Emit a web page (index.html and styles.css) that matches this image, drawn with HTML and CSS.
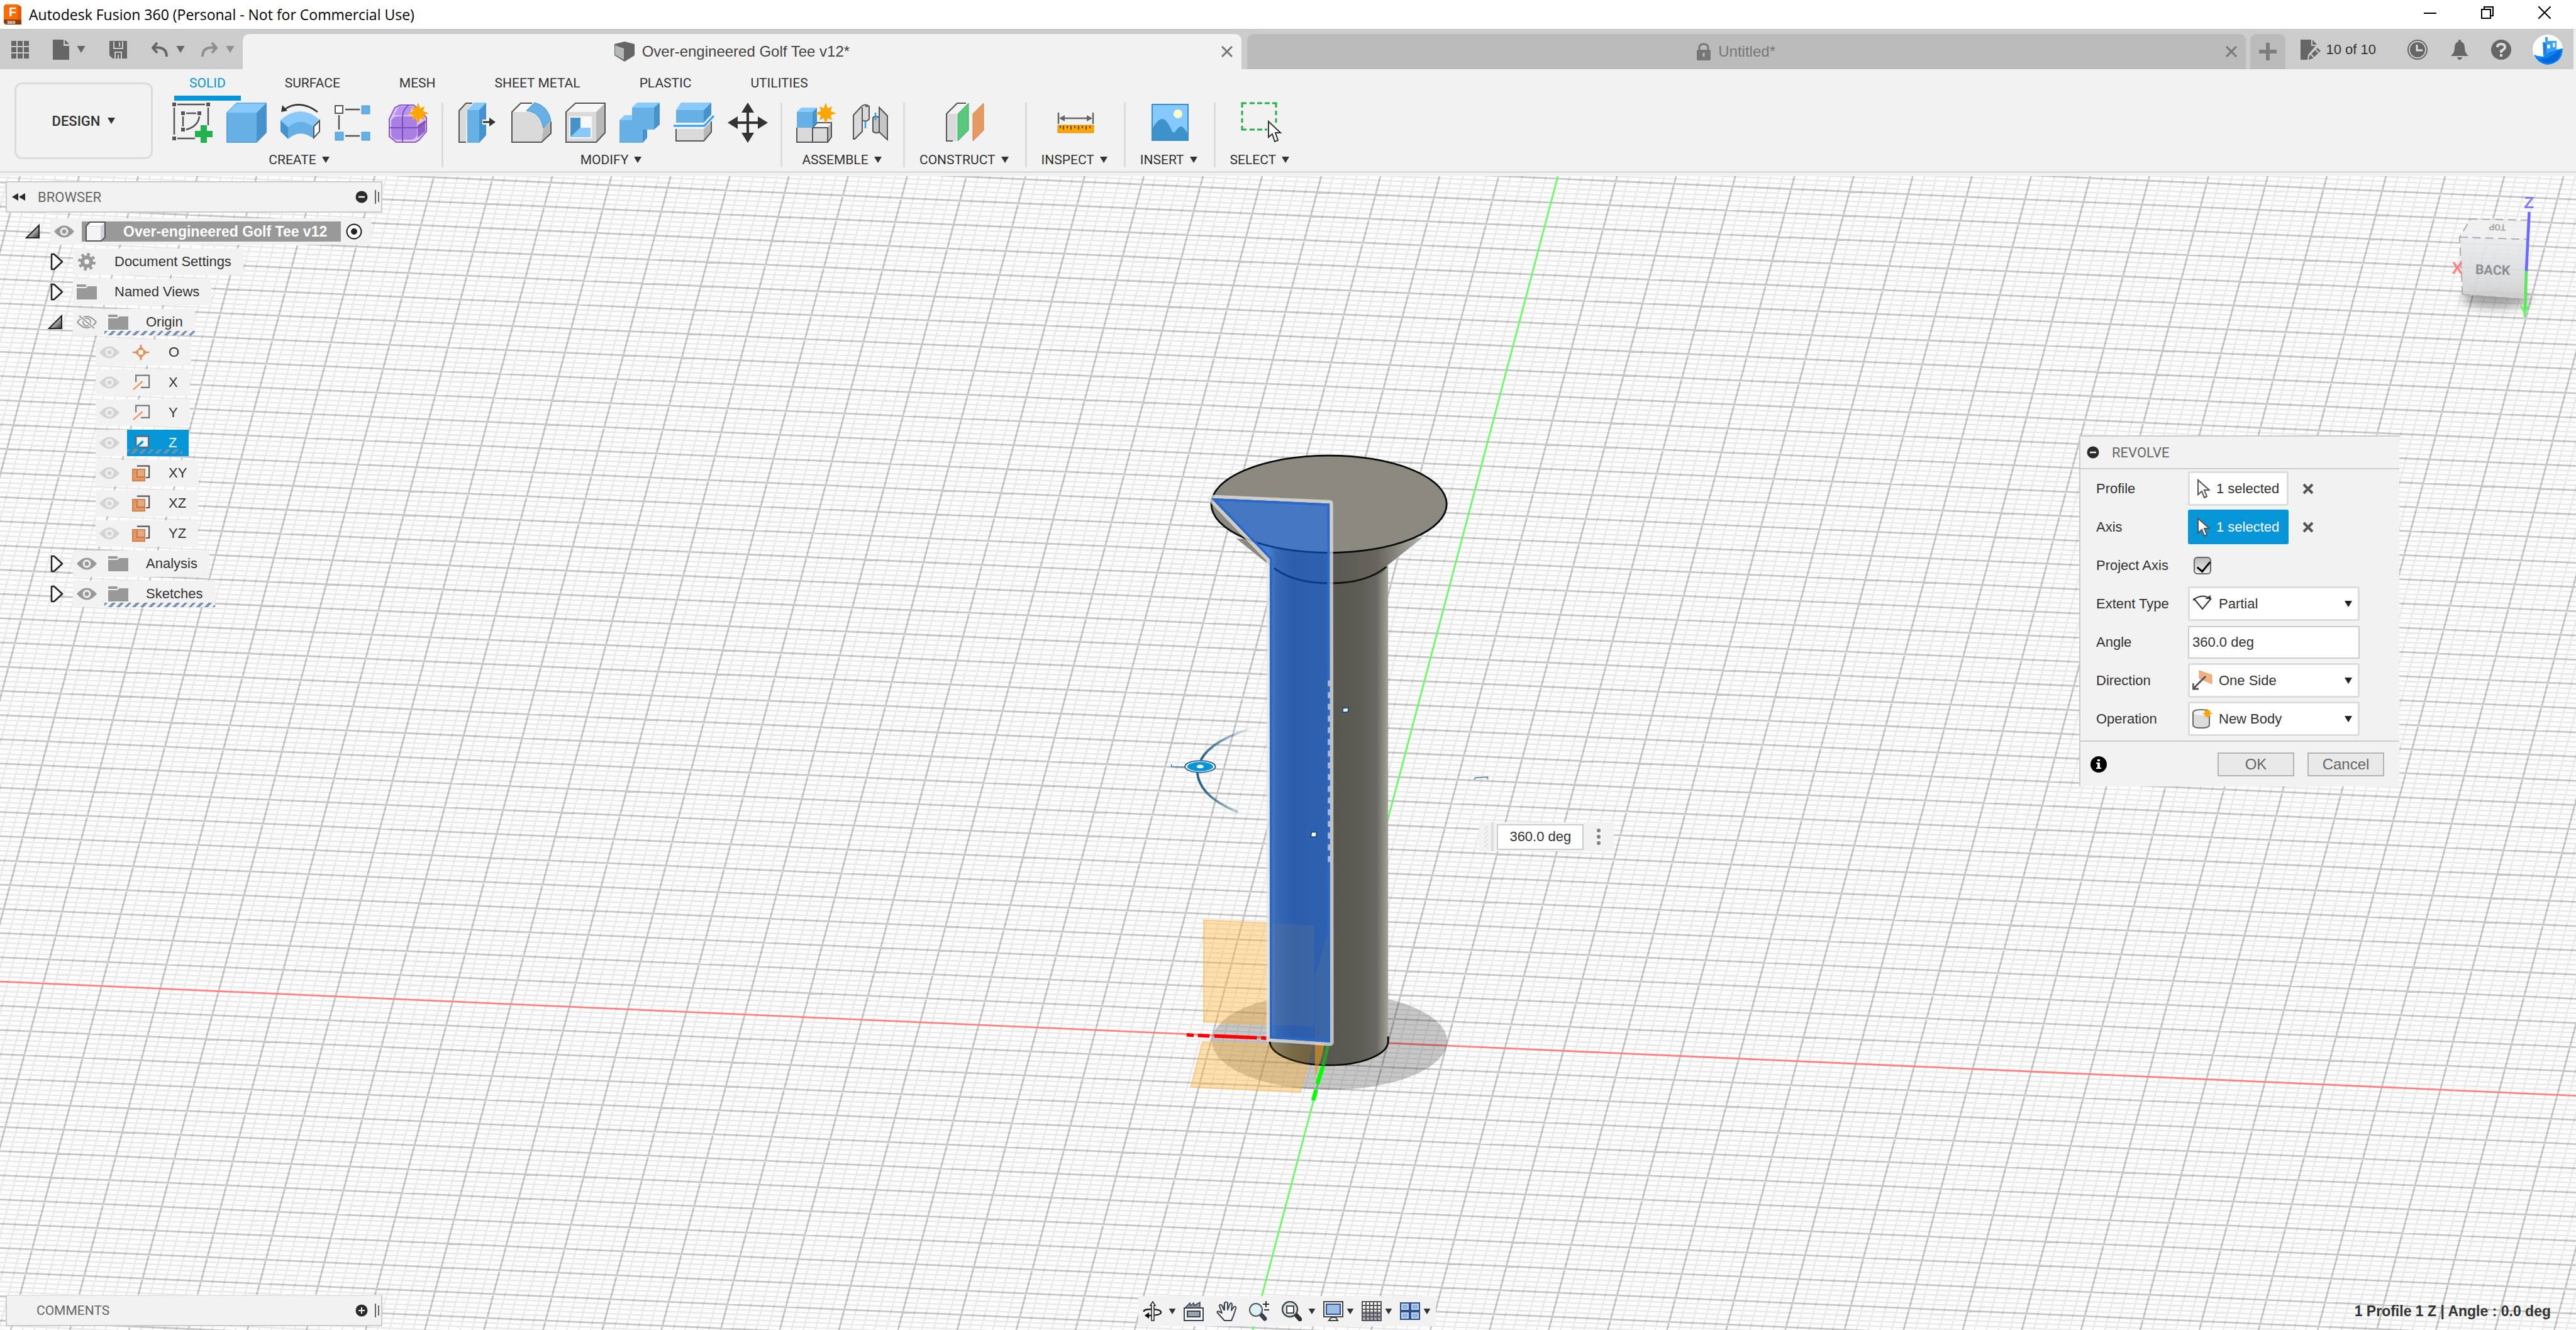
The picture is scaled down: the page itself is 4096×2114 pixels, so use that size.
FILE: index.html
```html
<!DOCTYPE html>
<html lang="en">
<head>
<meta charset="utf-8">
<title>Autodesk Fusion 360 (Personal - Not for Commercial Use)</title>
<link rel="stylesheet" href="styles.css">
</head>
<body>
<svg class="sprite" aria-hidden="true">
  <symbol id="caret" viewBox="0 0 12 10"><path d="M0 0H12L6 10Z" fill="currentColor"/></symbol>
  <symbol id="star" viewBox="-17 -17 34 34"><path d="M0-16L3-7.4L9.500-10.500L7.400-3L16 0L7.400 3L9.500 10.500L3 7.400L0 16L-3 7.400L-9.500 10.500L-7.400 3L-16 0L-7.400-3L-9.500-10.500L-3-7.400Z" fill="#ffa500"/></symbol>
  <symbol id="cross" viewBox="0 0 18 18"><path d="M2 2L16 16M16 2L2 16" stroke="currentColor" stroke-width="4" fill="none"/></symbol>
  <symbol id="eye" viewBox="0 0 32 20"><path d="M0 10Q16-9 32 10Q16 29 0 10Z" fill="currentColor"/><circle cx="16" cy="10" r="6.500" fill="#f2f2f2"/><circle cx="16" cy="10" r="3.500" fill="currentColor"/></symbol>
  <symbol id="eye-off" viewBox="0 0 32 22"><path d="M1 11Q16-7 31 11Q16 29 1 11Z" fill="none" stroke="currentColor" stroke-width="2"/><circle cx="16" cy="11" r="6" fill="none" stroke="currentColor" stroke-width="2"/><path d="M4 1L28 21" stroke="#f2f2f2" stroke-width="5"/><path d="M4 1L28 21" stroke="currentColor" stroke-width="2"/></symbol>
  <symbol id="folder" viewBox="0 0 32 24"><path d="M0 0H14L16 3H32V24H0Z" fill="#999"/><path d="M0 5H14L17 3" stroke="#f2f2f2" stroke-width="2" fill="none"/></symbol>
  <symbol id="tri-open" viewBox="0 0 24 24"><path d="M2 22L22 2V22Z" fill="url(#triGrad)" stroke="#222" stroke-width="2"/></symbol>
  <symbol id="tri-closed" viewBox="-4 0 26 28"><path d="M2 2H6L19 14L6 26H2Z" fill="#fafafa" stroke="#222" stroke-width="2.500" stroke-linejoin="round"/></symbol>
  <symbol id="axis" viewBox="0 0 32 32"><path d="M7 15V3H31V25H16" fill="none" stroke="#777" stroke-width="2.500"/><path d="M2 29L19 14" stroke="#ee9a60" stroke-width="3"/></symbol>
  <symbol id="plane" viewBox="0 0 32 32"><path d="M9 3H31V24H25" fill="none" stroke="#555" stroke-width="2.500"/><rect x="0" y="8" width="24" height="23" fill="#e6965e"/><rect x="9" y="9" width="14" height="14" fill="#e3aa82"/><path d="M9 8V23H24" stroke="#b87444" stroke-width="2" fill="none"/><rect x="1" y="9" width="22" height="21" fill="none" stroke="#cf7f45" stroke-width="2"/></symbol>
  <symbol id="cursor" viewBox="0 0 20 32"><path d="M1 2V25L7 20L11 30L15 28L11 18L19 18Z" fill="#fafafa" stroke="#555" stroke-width="2"/></symbol>
  <symbol id="minus" viewBox="0 0 20 20"><circle cx="10" cy="10" r="9.500" fill="#2b2b2b"/><path d="M5 10H15" stroke="#f2f2f2" stroke-width="2.500"/></symbol>
  <symbol id="plus" viewBox="0 0 20 20"><circle cx="10" cy="10" r="9.500" fill="#2b2b2b"/><path d="M5 10H15M10 5V15" stroke="#f2f2f2" stroke-width="2"/></symbol>
  <symbol id="bars" viewBox="0 0 8 22"><path d="M1 0V22M6 3V19" stroke="#666" stroke-width="2"/></symbol>
  <defs>
    <linearGradient id="triGrad" x1="0" y1="0" x2="1" y2="1"><stop offset=".3" stop-color="#eee"/><stop offset="1" stop-color="#333"/></linearGradient>
  </defs>
</svg>

<div class="app">
  <header class="titlebar">
    <svg class="logo" viewBox="0 0 28 32"><path d="M3 0H22L28 4V32H3L0 29V3Z" fill="#e35c00"/><path d="M3 0H22V24H0V3Z" fill="#ff6b00"/><path d="M0 24H22L28 25V32H3L0 29Z" fill="#8f3a05"/><text x="8" y="19" class="logo-f">F</text><text x="5" y="31" class="logo-n">360</text></svg>
    <h1 class="app-title">Autodesk Fusion 360 (Personal - Not for Commercial Use)</h1>
    <div class="window-controls">
      <button class="plain" aria-label="Minimize"><svg width="20" height="20" viewBox="0 0 20 20"><path d="M0 11H20" stroke="#000" stroke-width="2"/></svg></button>
      <button class="plain" aria-label="Restore"><svg width="20" height="20" viewBox="0 0 20 20"><path d="M1 5H15V19H1ZM5 5V1H19V15H15" fill="none" stroke="#000" stroke-width="2"/></svg></button>
      <button class="plain" aria-label="Close"><svg width="20" height="20" viewBox="0 0 20 20"><path d="M0 0L20 20M20 0L0 20" stroke="#000" stroke-width="2"/></svg></button>
    </div>
  </header>

  <div class="tabbar">
    <div class="quick">
      <button class="plain" aria-label="Data panel"><svg width="28" height="28" viewBox="0 0 28 28"><path d="M0 0H8V8H0ZM10 0H18V8H10ZM20 0H28V8H20ZM0 10H8V18H0ZM10 10H18V18H10ZM20 10H28V18H20ZM0 20H8V28H0ZM10 20H18V28H10ZM20 20H28V28H20Z" fill="#666"/></svg></button>
      <button class="plain q-file" aria-label="File"><svg width="26" height="32" viewBox="0 0 26 32"><path d="M0 0H17V10H26V32H0Z" fill="#666"/><path d="M19 0L26 7H19Z" fill="#666"/></svg><svg class="caret"><use href="#caret"/></svg></button>
      <button class="plain q-save" aria-label="Save"><svg width="28" height="28" viewBox="0 0 28 28"><path d="M0 0H28V28H5L0 23Z" fill="#666"/><path d="M7 1V12H21V1M9 28V18H19V28M14 22V28M16 2V9" fill="none" stroke="#ccc" stroke-width="2"/></svg></button>
      <button class="plain q-undo" aria-label="Undo"><svg width="26" height="24" viewBox="0 0 26 24"><path d="M9 1L2 9L9 17M3 9Q24 6 24 23" fill="none" stroke="#666" stroke-width="4"/></svg><svg class="caret"><use href="#caret"/></svg></button>
      <button class="plain q-redo" aria-label="Redo"><svg width="26" height="24" viewBox="0 0 26 24"><path d="M17 1L24 9L17 17M23 9Q2 6 2 23" fill="none" stroke="#8f8f8f" stroke-width="4"/></svg><svg class="caret"><use href="#caret"/></svg></button>
    </div>
    <div class="tabs">
      <div class="tab tab-on">
        <span class="tab-name"><svg width="32" height="32" viewBox="0 0 32 32"><path d="M0 4L16 0L32 4V22L16 32L0 22Z" fill="#666"/><path d="M1 6L15 11V29L1 21Z" fill="#b4b8b7"/></svg>Over-engineered Golf Tee v12*</span>
        <button class="plain" aria-label="Close tab"><svg width="18" height="18" viewBox="0 0 18 18"><path d="M1 1L17 17M17 1L1 17" stroke="#777" stroke-width="3"/></svg></button>
      </div>
      <div class="tab">
        <span class="tab-name tab-locked"><svg width="22" height="28" viewBox="0 0 22 28"><path d="M4 12V8Q4 2 11 2T18 8V12" fill="none" stroke="#777" stroke-width="3"/><rect y="11" width="22" height="17" rx="2" fill="#777"/><path d="M11 16V22" stroke="#bbb" stroke-width="3"/></svg>Untitled*</span>
        <button class="plain" aria-label="Close tab"><svg width="18" height="18" viewBox="0 0 18 18"><path d="M1 1L17 17M17 1L1 17" stroke="#777" stroke-width="3"/></svg></button>
      </div>
    </div>
    <button class="plain newtab" aria-label="New tab"><svg width="28" height="28" viewBox="0 0 28 28"><path d="M14 0V28M0 14H28" stroke="#7d7d7d" stroke-width="6"/></svg></button>
    <div class="account">
      <button class="plain docs"><svg width="32" height="32" viewBox="0 0 32 32"><path d="M0 0H17V10H24L12 24L11 32H0Z" fill="#666"/><path d="M19 0L26 8H19Z" fill="#666"/><path d="M14 26L27 13L32 18L19 30L13 32Z" fill="#666"/><path d="M24 16L29 21M16 23L21 28" stroke="#ccc" stroke-width="2"/></svg>10 of 10</button>
      <button class="plain a-clock" aria-label="Job status"><svg width="32" height="32" viewBox="0 0 32 32"><circle cx="16" cy="16" r="15" fill="none" stroke="#666" stroke-width="2"/><circle cx="16" cy="16" r="12" fill="#666"/><path d="M15 8V17H24" stroke="#ddd" stroke-width="3" fill="none"/></svg></button>
      <button class="plain a-bell" aria-label="Notifications"><svg width="28" height="32" viewBox="0 0 28 32"><path d="M12 3V1Q14-1 16 1V3Q22 5 22 13Q22 21 28 26H0Q6 21 6 13Q6 5 12 3ZM10 28H18Q17 32 14 32T10 28Z" fill="#666"/></svg></button>
      <button class="plain a-help" aria-label="Help"><svg width="32" height="32" viewBox="0 0 32 32"><circle cx="16" cy="16" r="16" fill="#666"/><path d="M10 12Q10 7 16 7T22 12Q22 15 16 18V21" fill="none" stroke="#ddd" stroke-width="4"/><rect x="14" y="23" width="4" height="4" fill="#ddd"/></svg></button>
      <button class="plain a-user" aria-label="Account"><svg width="48" height="48" viewBox="0 0 48 48"><circle cx="24" cy="24" r="24" fill="#fff"/><path d="M2 32Q9 35 17 35Q22 26 48 22Q48 34 41 41Q33 48 23 48Q8 46 2 32Z" fill="#0a84f0"/><path d="M16 12H20V4H24V10H38V24Q26 27 17 34Z" fill="#3a9ff5"/><path d="M23 16H28V22H23ZM32 13H36V20H32Z" fill="#d6ecff"/><path d="M9 38Q22 42 40 26L46 24Q43 38 36 42Q22 50 9 38Z" fill="#0668d8"/><path d="M17 12L22 15V30L17 33Z" fill="#1c7ddd"/></svg></button>
    </div>
  </div>

  <div class="ribbon">
    <button class="plain workspace">DESIGN <svg class="caret"><use href="#caret"/></svg></button>
    <div class="ribbon-main">
      <nav class="modes">
        <a class="mode mode-on" href="#solid">SOLID</a>
        <a class="mode" href="#surface">SURFACE</a>
        <a class="mode" href="#mesh">MESH</a>
        <a class="mode" href="#sheet">SHEET METAL</a>
        <a class="mode" href="#plastic">PLASTIC</a>
        <a class="mode" href="#utilities">UTILITIES</a>
      </nav>
      <div class="groups">
        <section class="group">
          <div class="tools">
            <button class="plain" aria-label="Create sketch"><svg class="tool" viewBox="0 0 64 64"><path d="M8 3H52M3 8V51M57 8V36M8 57H36M17 22V38M22 17H38M43 22Q41 38 22 43" stroke="#555" stroke-width="2.500" fill="none"/><path d="M0 0H6V6H0ZM54 0H60V6H54ZM0 54H6V60H0ZM14 14H20V20H14ZM40 14H46V20H40ZM14 40H20V46H14Z" fill="#555"/><path d="M45 36H55V45H64V55H55V64H45V55H36V45H45Z" fill="#22b14c"/></svg></button>
            <button class="plain" aria-label="Extrude"><svg class="tool" viewBox="0 0 64 64"><path d="M0 16L16 0H64L48 16Z" fill="#89c9fb"/><path d="M0 16H48V64H0Z" fill="#67b0e6"/><path d="M64 0V48L48 64V16Z" fill="#4592cc"/><path d="M1 16L16 1H63V48L48 63H1Z" fill="none" stroke="#4a98d2" stroke-width="1"/></svg></button>
            <button class="plain" aria-label="Revolve"><svg class="tool" viewBox="0 0 64 64"><path d="M6 11Q31-6 59 15" fill="none" stroke="#333" stroke-width="2.500"/><path d="M1 15L3 4L11 13Z" fill="#333"/><path d="M0 28Q31 0 63 28L52 38Q31 22 12 39Z" fill="#89c9fb"/><path d="M12 39Q31 22 52 38V57Q31 41 12 58Z" fill="#67b0e6"/><path d="M0 28L12 39V58L0 46Z" fill="#4592cc"/><path d="M62 29L53 38V56L62 46Z" fill="#fff" stroke="#555" stroke-width="2"/></svg></button>
            <button class="plain" aria-label="Pattern"><svg class="tool" viewBox="0 0 64 64"><path d="M17 11H40M7 20V43M17 53H40" stroke="#555" stroke-width="2.500"/><rect x="1" y="5" width="12" height="12" fill="#fff" stroke="#555" stroke-width="2"/><path d="M43 5H56V18H43ZM1 47H14V60H1ZM43 47H56V60H43Z" fill="#67b0e6" stroke="#4a98d2"/></svg></button>
            <button class="plain" aria-label="Create form"><svg class="tool" viewBox="0 0 64 64"><path d="M1 26L10 8L18 4H40L60 24V46L48 60L42 63H12L1 54Z" fill="#dcc6fb" stroke="#8d5cc8" stroke-width="2"/><path d="M46 36L58 28V46L46 56Z" fill="#8f60cc"/><rect x="4" y="22" width="41" height="37" rx="9" fill="#a97fe6"/><path d="M8 20L17 6H38L32 20Z" fill="#b993f2"/><path d="M22 62V22Q23 10 32 4M2 40H46L59 30" fill="none" stroke="#7a4eb5" stroke-width="2"/><use href="#star" x="29" y="-1" width="36" height="36"/></svg></button>
          </div>
          <button class="plain label">CREATE <svg class="caret"><use href="#caret"/></svg></button>
        </section>
        <section class="group">
          <div class="tools">
            <button class="plain" aria-label="Press pull"><svg class="tool" viewBox="0 0 64 64"><path d="M14 63H3V13L14 1H24L15 14Z" fill="#dadada"/><path d="M14 63H3V13L14 1H24" fill="none" stroke="#555" stroke-width="2"/><path d="M16 12H35V64H16Z" fill="#67b0e6"/><path d="M16 12L27 0H46L35 12Z" fill="#89c9fb"/><path d="M35 12L46 0V52L35 64Z" fill="#4592cc"/><path d="M40 31H54" stroke="#fff" stroke-width="8"/><path d="M41 31H54" stroke="#333" stroke-width="3"/><path d="M51 24L61 31L51 38Z" fill="#333"/></svg></button>
            <button class="plain" aria-label="Fillet"><svg class="tool" viewBox="0 0 64 64"><path d="M1 63V15L15 1H33L26 14Q46 18 51 41L63 30V49L48 63Z" fill="#dadada"/><path d="M1 15L15 1H33L24 15Z" fill="#f8f8f8"/><path d="M51 42L63 30V49L48 63Z" fill="#b9b9b9"/><path d="M33 1H15L1 15V63H48L63 49V30" fill="none" stroke="#555" stroke-width="2"/><path d="M24 13L37 0Q58 5 63 28L51 41Q46 15 24 13Z" fill="#67b0e6" stroke="#4a98d2"/></svg></button>
            <button class="plain" aria-label="Shell"><svg class="tool" viewBox="0 0 64 64"><path d="M1 15L16 1H63L49 15Z" fill="#f6f6f6"/><path d="M1 15H49V63H1Z" fill="#dadada"/><path d="M49 15L63 1V48L49 63Z" fill="#b9b9b9"/><path d="M1 15L16 1H63V48L49 63H1Z" fill="none" stroke="#555" stroke-width="2"/><path d="M6 22H42V57H6Z" fill="#f8f8f8"/><path d="M8 24H24V40L8 55Z" fill="#4592cc"/><path d="M24 40H40V55H8Z" fill="#89c9fb"/></svg></button>
            <button class="plain" aria-label="Combine"><svg class="tool" viewBox="0 0 64 64"><path d="M0 28H20V8H55V43H37V64H0Z" fill="#67b0e6"/><path d="M0 28L8 20H20V28ZM20 8L28 0H64L55 8Z" fill="#89c9fb"/><path d="M55 8L64 0V35L55 43ZM37 43H44V56L37 64Z" fill="#4592cc"/></svg></button>
            <button class="plain" aria-label="Split body"><svg class="tool" viewBox="0 0 64 64"><path d="M4 12H48V32H4Z" fill="#67b0e6"/><path d="M4 12L12 0H60L48 12Z" fill="#89c9fb"/><path d="M48 12L60 0V19L48 32Z" fill="#4592cc"/><path d="M0 37H49L64 21" fill="none" stroke="#2a9df4" stroke-width="3"/><path d="M4 42H48V61H4Z" fill="#dadada"/><path d="M48 42L60 30V47L48 61Z" fill="#b9b9b9"/><path d="M4 42V61H48L60 47V30" fill="none" stroke="#555" stroke-width="2"/></svg></button>
            <button class="plain" aria-label="Move"><svg class="tool" viewBox="0 0 64 64"><path d="M32 8V56M8 32H56" stroke="#333" stroke-width="4"/><path d="M32 0L42 16H22ZM32 64L42 48H22ZM0 32L16 22V42ZM64 32L48 22V42Z" fill="#333"/></svg></button>
          </div>
          <button class="plain label">MODIFY <svg class="caret"><use href="#caret"/></svg></button>
        </section>
        <section class="group">
          <div class="tools">
            <button class="plain" aria-label="New component"><svg class="tool" viewBox="0 0 64 64"><path d="M1 40H50V63H1Z" fill="#dadada"/><path d="M26 40L33 32H56L50 40Z" fill="#f6f6f6"/><path d="M50 40L56 32V55L50 63Z" fill="#b9b9b9"/><path d="M1 40V63H50L56 55V32H33L26 40V63M26 40H50V63" fill="none" stroke="#555" stroke-width="2"/><path d="M1 15H26V40H1Z" fill="#67b0e6"/><path d="M1 15L8 8H33L26 15Z" fill="#89c9fb"/><path d="M26 15L33 8V32L26 40Z" fill="#4592cc"/><use href="#star" x="29" y="-1" width="36" height="36"/></svg></button>
            <button class="plain" aria-label="Joint"><svg class="tool" viewBox="0 0 64 64"><path d="M5 20L18 6Q24 1 30 6V26Q26 32 19 28V46L7 58H5Z" fill="#dadada" stroke="#555" stroke-width="2"/><path d="M19 8V28M24 6H28" stroke="#555" stroke-width="2"/><path d="M36 24Q40 20 46 24V8L59 21V59L46 47Q40 50 36 46Z" fill="#c6c6c6" stroke="#555" stroke-width="2"/><path d="M46 24V47" stroke="#555" stroke-width="2"/><path d="M24 30V41M40 16V28" stroke="#2a9df4" stroke-width="2.500"/></svg></button>
          </div>
          <button class="plain label">ASSEMBLE <svg class="caret"><use href="#caret"/></svg></button>
        </section>
        <section class="group">
          <div class="tools">
            <button class="plain" aria-label="Offset plane"><svg class="tool" viewBox="0 0 64 64"><path d="M2 18H18V61H2Z" fill="#dadada"/><path d="M12 61H2V18L19 1H33" fill="none" stroke="#555" stroke-width="2"/><path d="M20 18L37 1V44L20 61Z" fill="#5bc77e" stroke="#35b35f"/><path d="M44 18L61 1V44L44 61Z" fill="#e69a63" stroke="#d6803f"/></svg></button>
          </div>
          <button class="plain label">CONSTRUCT <svg class="caret"><use href="#caret"/></svg></button>
        </section>
        <section class="group">
          <div class="tools">
            <button class="plain" aria-label="Measure"><svg class="tool" viewBox="0 0 64 64"><path d="M4 16V34M59 16V34M8 25H55" stroke="#666" stroke-width="2.500"/><path d="M5 25L14 20V30ZM58 25L49 20V30Z" fill="#666"/><path d="M3 36H60V48H3Z" fill="#ffa500" stroke="#e08e00"/><path d="M7 37V41M12 37V43M18 37V41M24 37V43M30 37V41M36 37V43M42 37V41M48 37V43M54 37V41" stroke="#555" stroke-width="2"/></svg></button>
          </div>
          <button class="plain label">INSPECT <svg class="caret"><use href="#caret"/></svg></button>
        </section>
        <section class="group">
          <div class="tools">
            <button class="plain" aria-label="Insert canvas"><svg class="tool" viewBox="0 0 64 64"><rect x="3" y="3" width="57" height="57" fill="#84c9ff"/><circle cx="44" cy="18" r="7" fill="#ffffc8"/><path d="M3 42Q12 26 19 26T34 44Q36 50 40 46Q45 38 49 38T60 50V60H3Z" fill="#3d92cc"/><rect x="3" y="3" width="57" height="57" fill="none" stroke="#3a8fcb" stroke-width="2"/></svg></button>
          </div>
          <button class="plain label">INSERT <svg class="caret"><use href="#caret"/></svg></button>
        </section>
        <section class="group">
          <div class="tools">
            <button class="plain" aria-label="Select"><svg class="tool" viewBox="0 0 64 64"><path d="M2 8V1H9M14 1H22M26 1H34M38 1H46M50 1H56V8M56 13V20M56 25V32M2 13V20M2 25V32M2 37V43H9M14 43H22M26 43H34M38 43H42" fill="none" stroke="#22b14c" stroke-width="3"/><path d="M44 30V55L50 50L54 62L59 60L55 48H63Z" fill="#fff" stroke="#333" stroke-width="2"/></svg></button>
          </div>
          <button class="plain label">SELECT <svg class="caret"><use href="#caret"/></svg></button>
        </section>
      </div>
    </div>
  </div>

  <main class="viewport">
    <svg class="scene" viewBox="0 301 4400 1970" preserveAspectRatio="xMidYMid slice">
      <defs>
        <linearGradient id="cyl"><stop offset="0" stop-color="#8d8d85"/><stop offset=".2" stop-color="#66665f"/><stop offset=".5" stop-color="#585650"/><stop offset=".75" stop-color="#5c5b54"/><stop offset=".9" stop-color="#686862"/><stop offset="1" stop-color="#a3a398"/></linearGradient>
        <linearGradient id="cone" x1="2168" x2="2430" y1="0" y2="0" gradientUnits="userSpaceOnUse"><stop offset="0" stop-color="#8a887f"/><stop offset=".4" stop-color="#5a5852"/><stop offset=".7" stop-color="#66645d"/><stop offset="1" stop-color="#b5b4ac"/></linearGradient>
        <linearGradient id="blue" x1="2168" x2="2272" y1="0" y2="0" gradientUnits="userSpaceOnUse"><stop offset="0" stop-color="#447dcc"/><stop offset=".12" stop-color="#3768b5"/><stop offset=".4" stop-color="#2b5dab"/><stop offset="1" stop-color="#2e62b0"/></linearGradient>
        <linearGradient id="fadeUp" x1="2051" x2="2140" y1="0" y2="0" gradientUnits="userSpaceOnUse"><stop offset="0" stop-color="#235f86"/><stop offset=".5" stop-color="#235f86" stop-opacity=".5"/><stop offset="1" stop-color="#235f86" stop-opacity="0"/></linearGradient>
        <linearGradient id="cube" x1="0" y1="0" x2="0" y2="1"><stop offset="0" stop-color="#e9ebee"/><stop offset="1" stop-color="#d2d2d2"/></linearGradient>
        <filter id="soft" x="-50%" y="-50%" width="200%" height="200%"><feGaussianBlur stdDeviation="8"/></filter>
        <clipPath id="bodyClip"><path d="M2168 960H2371V1778A101 41 0 0 1 2168 1778Z"/></clipPath>
        <clipPath id="profileClip"><path d="M2069 851L2271 860L2272 1780L2169 1773V955Z"/></clipPath>
      </defs>
      <rect x="0" y="301" width="4400" height="1970" fill="#fdfdfd"/>
      <path id="minorGrid" fill="none" stroke="#000" stroke-opacity=".08" stroke-width="2.600"/>
      <path id="majorGrid" fill="none" stroke="#000" stroke-opacity=".21" stroke-width="3"/>
      <path d="M0 1676L4400 1871" stroke="#ff8080" stroke-width="3"/>
      <path d="M2661 301L2140 2271" stroke="#6bfa6b" stroke-width="3"/>
      <ellipse cx="2271" cy="1778" rx="201" ry="83" fill="#000" fill-opacity=".21"/>
      <path d="M2056 1571L2245 1580V1753L2056 1745ZM2054 1779L2243 1786L2221 1865L2034 1856Z" fill="#ffb437" fill-opacity=".4" stroke="#f5b040" stroke-opacity=".5" stroke-width="2"/>
      <path d="M2027 1767L2039 1768M2046 1768L2066 1769M2074 1769L2147 1772M2154 1772L2163 1773" stroke="#f00" stroke-width="6"/>
      <path d="M2168 950H2371V1778A101 41 0 0 1 2168 1778Z" fill="url(#cyl)"/>
      <path d="M2169 1778A101 41 0 0 0 2371 1778V1770" fill="none" stroke="#0a0a0a" stroke-width="3"/>
      <path d="M2112 920L2168 965Q2180 996 2270 996T2368 967L2430 918Z" fill="url(#cone)"/>
      <path d="M2176 970Q2210 996 2272 996T2368 968" fill="none" stroke="#111" stroke-width="3"/>
      <ellipse cx="2270" cy="861" rx="201" ry="83" fill="#8c8981" stroke="#0a0a0a" stroke-width="3"/>
      <g clip-path="url(#bodyClip)"><path d="M2054 1779L2243 1786L2221 1865L2034 1856Z" fill="#b07400" fill-opacity=".25"/></g>
      <path d="M2246 1780L2262 1782L2259 1800L2246 1841Z" fill="#e69a20" fill-opacity=".6"/>
      <path d="M2268 1786L2260 1819" stroke="#2f9a2f" stroke-width="6"/>
      <path d="M2260 1820L2250 1851M2248 1861L2243 1879" stroke="#0f0" stroke-width="7"/>
      <path d="M2069 851L2271 860L2272 1780L2169 1773V955Z" fill="none" stroke="#e6e4df" stroke-opacity=".75" stroke-width="12" stroke-linejoin="round"/>
      <path d="M2069 851L2271 860L2272 1780L2169 1773V955Z" fill="url(#blue)"/>
      <g clip-path="url(#profileClip)">
        <ellipse cx="2270" cy="861" rx="201" ry="83" fill="#4577c2"/>
        <path d="M2069 861A201 83 0 0 0 2471 861M2176 970Q2210 996 2272 996" fill="none" stroke="#0b3a86" stroke-width="3"/>
        <path d="M2056 1571L2245 1580V1753L2056 1745ZM2246 1667L2272 1580V1780H2246Z" fill="#ffb437" fill-opacity=".07"/>
        <path d="M2069 851L2271 860L2272 1780L2169 1773V955Z" fill="none" stroke="#2a69c9" stroke-width="8"/>
      </g>
      <path d="M2270 1162V1473" stroke="#a9bde2" stroke-width="4" stroke-dasharray="10 10"/>
      <path d="M2294 1209H2304L2302 1216H2293ZM2240 1421H2249L2248 1429H2239Z" fill="#fff" stroke="#1b4f77" stroke-width="2"/>
      <path d="M2051 1298Q2070 1262 2148 1241" fill="none" stroke="url(#fadeUp)" stroke-width="4"/>
      <path d="M2045 1318Q2048 1360 2115 1387" fill="none" stroke="url(#fadeUp)" stroke-width="4"/>
      <path d="M2001 1305V1309L2024 1310M2518 1331L2520 1328L2541 1327V1331" fill="none" stroke="#5b8aa8" stroke-width="2"/>
      <ellipse cx="2050" cy="1309" rx="26" ry="10" fill="#fff" stroke="#235f86" stroke-width="2"/>
      <ellipse cx="2050" cy="1309" rx="22" ry="8" fill="#0696d7"/><ellipse cx="2050" cy="1309" rx="6" ry="3" fill="#fff"/>
      <ellipse cx="4264" cy="510" rx="58" ry="16" fill="#000" fill-opacity=".35" filter="url(#soft)"/>
      <path d="M4220 374L4317 376V409L4201 405Z" fill="#efefef" fill-opacity=".88"/>
      <path d="M4201 405L4317 409L4313 511L4206 503Z" fill="url(#cube)" fill-opacity=".9"/>
      <path d="M4206 503L4201 405L4220 374L4317 376M4201 405L4317 409M4206 503L4313 511" fill="none" stroke="#aaa" stroke-width="2" stroke-dasharray="14 8"/>
      <path d="M4320 362L4315 463" stroke="#6a6aff" stroke-width="5"/>
      <path d="M4315 463L4313 530" stroke="#5fe65f" stroke-width="5"/>
      <text class="cube-back" x="4228" y="469" transform="rotate(2 4258 460)">BACK</text>
      <text class="cube-top" x="4244" y="395" transform="rotate(181 4262 389)">TOP</text>
      <text class="cube-axis" x="4311" y="356" fill="#8080ff">Z</text>
      <text class="cube-axis" x="4188" y="468" fill="#ff7d7d">X</text>
      <text class="cube-axis" x="4303" y="542" fill="#6cf06c">Y</text>
    </svg>

    <aside class="browser">
      <div class="panel-head">
        <svg width="22" height="12" viewBox="0 0 22 12"><path d="M10 0V12L0 6ZM21 0V12L11 6Z" fill="#2b2b2b"/></svg>
        <h2 class="panel-title">BROWSER</h2>
        <button class="plain" aria-label="Collapse"><svg width="20" height="20"><use href="#minus"/></svg></button>
        <svg class="bars"><use href="#bars"/></svg>
      </div>
      <ul class="tree">
        <li class="row"><span class="toggle"><svg width="24" height="24"><use href="#tri-open"/></svg></span><span class="cell"><svg class="eye"><use href="#eye"/></svg><span class="item root"><svg class="glyph" viewBox="0 0 32 32"><path d="M1 7L7 1H31V25L25 31H1Z" fill="#d0d2d8" stroke="#555" stroke-width="2"/><path d="M2 8H24V30H2Z" fill="#f3f4f8"/><path d="M3 7L8 2H30L25 7Z" fill="#fff"/></svg>Over-engineered Golf Tee v12</span><svg class="radio" viewBox="0 0 26 26"><circle cx="13" cy="13" r="11.500" fill="#fff" stroke="#222" stroke-width="2"/><circle cx="13" cy="13" r="5" fill="#222"/></svg></span></li>
        <li class="row l1"><span class="toggle"><svg width="26" height="28"><use href="#tri-closed"/></svg></span><span class="cell"><span class="item bare"><svg class="glyph" viewBox="0 0 32 32"><circle cx="16" cy="16" r="8" fill="none" stroke="#999" stroke-width="7"/><circle cx="16" cy="16" r="13" fill="none" stroke="#999" stroke-width="6" stroke-dasharray="5 5.210"/></svg>Document Settings</span></span></li>
        <li class="row l1"><span class="toggle"><svg width="26" height="28"><use href="#tri-closed"/></svg></span><span class="cell"><span class="item bare"><svg class="glyph"><use href="#folder"/></svg>Named Views</span></span></li>
        <li class="row l1"><span class="toggle"><svg width="24" height="24"><use href="#tri-open"/></svg></span><span class="cell"><svg class="eye"><use href="#eye-off"/></svg><span class="item hatch"><svg class="glyph"><use href="#folder"/></svg>Origin</span></span></li>
        <li class="row l2"><span class="cell"><svg class="eye dim"><use href="#eye"/></svg><span class="item"><svg class="glyph" viewBox="0 0 32 32"><path d="M16 2V30M1 16H31" stroke="#e08a50" stroke-width="3"/><path d="M16 5L27 16L16 27L5 16Z" fill="#e0905a"/><rect x="12" y="12" width="8" height="8" fill="#fff"/></svg>O</span></span></li>
        <li class="row l2"><span class="cell"><svg class="eye dim"><use href="#eye"/></svg><span class="item"><svg class="glyph"><use href="#axis"/></svg>X</span></span></li>
        <li class="row l2"><span class="cell"><svg class="eye dim"><use href="#eye"/></svg><span class="item"><svg class="glyph"><use href="#axis"/></svg>Y</span></span></li>
        <li class="row l2"><span class="cell"><svg class="eye dim"><use href="#eye"/></svg><span class="item picked"><svg class="glyph" viewBox="0 0 32 32"><path d="M7 4H30V24H7Z" fill="#eef3f6" stroke="#55707f" stroke-width="3"/><path d="M2 30L19 14" stroke="#8a8078" stroke-width="3"/><path d="M8 24L20 13" stroke="#0696d7" stroke-width="4"/></svg>Z</span></span></li>
        <li class="row l2"><span class="cell"><svg class="eye dim"><use href="#eye"/></svg><span class="item"><svg class="glyph"><use href="#plane"/></svg>XY</span></span></li>
        <li class="row l2"><span class="cell"><svg class="eye dim"><use href="#eye"/></svg><span class="item"><svg class="glyph"><use href="#plane"/></svg>XZ</span></span></li>
        <li class="row l2"><span class="cell"><svg class="eye dim"><use href="#eye"/></svg><span class="item"><svg class="glyph"><use href="#plane"/></svg>YZ</span></span></li>
        <li class="row l1"><span class="toggle"><svg width="26" height="28"><use href="#tri-closed"/></svg></span><span class="cell"><svg class="eye"><use href="#eye"/></svg><span class="item"><svg class="glyph"><use href="#folder"/></svg>Analysis</span></span></li>
        <li class="row l1"><span class="toggle"><svg width="26" height="28"><use href="#tri-closed"/></svg></span><span class="cell"><svg class="eye"><use href="#eye"/></svg><span class="item hatch"><svg class="glyph"><use href="#folder"/></svg>Sketches</span></span></li>
      </ul>
    </aside>

    <div class="angle-float">
      <span class="grip"></span>
      <input class="float-input" type="text" value="360.0 deg" aria-label="Angle">
      <button class="plain" aria-label="More"><svg width="8" height="26" viewBox="0 0 8 26"><circle cx="4" cy="3" r="3" fill="#808080"/><circle cx="4" cy="13" r="3" fill="#808080"/><circle cx="4" cy="23" r="3" fill="#808080"/></svg></button>
    </div>

    <form class="revolve">
      <div class="revolve-head"><svg width="20" height="20"><use href="#minus"/></svg><h2 class="panel-title">REVOLVE</h2></div>
      <div class="fields">
        <div class="field"><label for="profile">Profile</label><button type="button" id="profile" class="plain pick"><svg class="cursor"><use href="#cursor"/></svg>1 selected</button><button type="button" class="plain clear" aria-label="Clear profile"><svg width="18" height="18"><use href="#cross"/></svg></button></div>
        <div class="field"><label for="axis-pick">Axis</label><button type="button" id="axis-pick" class="plain pick pick-on"><svg class="cursor"><use href="#cursor"/></svg>1 selected</button><button type="button" class="plain clear" aria-label="Clear axis"><svg width="18" height="18"><use href="#cross"/></svg></button></div>
        <div class="field"><label for="project">Project Axis</label><input type="checkbox" id="project" class="check" checked></div>
        <div class="field"><label for="extent">Extent Type</label><span class="combo"><svg class="combo-icon" viewBox="0 0 32 32"><path d="M2 8L16 25L30 8M1 11Q16-1 28 9" fill="none" stroke="#333" stroke-width="2"/><path d="M20 9H29V3Z" fill="#333"/></svg><select id="extent"><option>Partial</option></select><svg class="caret"><use href="#caret"/></svg></span></div>
        <div class="field"><label for="angle">Angle</label><input type="text" id="angle" class="text" value="360.0 deg"></div>
        <div class="field"><label for="direction">Direction</label><span class="combo"><svg class="combo-icon" viewBox="0 0 32 32"><path d="M11 1L31 8V22L11 13Z" fill="#f4b083" stroke="#e09a68"/><path d="M21 10L2 29M1 21V30H10" fill="none" stroke="#555" stroke-width="3"/></svg><select id="direction"><option>One Side</option></select><svg class="caret"><use href="#caret"/></svg></span></div>
        <div class="field"><label for="operation">Operation</label><span class="combo"><svg class="combo-icon" viewBox="0 0 32 32"><path d="M1 7Q1 2 14 2T27 7V26Q27 31 14 31T1 26Z" fill="#dcdcdc" stroke="#666" stroke-width="2"/><ellipse cx="14" cy="7" rx="12" ry="4" fill="#f4f4f4"/><use href="#star" x="15" y="-1" width="18" height="18"/></svg><select id="operation"><option>New Body</option></select><svg class="caret"><use href="#caret"/></svg></span></div>
      </div>
      <div class="revolve-foot">
        <svg width="26" height="26" viewBox="0 0 26 26"><circle cx="13" cy="13" r="13" fill="#000"/><path d="M9 10H15V18H17V20H9V18H11V12H9ZM11 5H15V8H11Z" fill="#fff"/></svg>
        <button type="button" class="plain act">OK</button>
        <button type="button" class="plain act">Cancel</button>
      </div>
    </form>

    <div class="panel-head comments">
      <h2 class="panel-title">COMMENTS</h2>
      <button class="plain" aria-label="Expand"><svg width="20" height="20"><use href="#plus"/></svg></button>
      <svg class="bars"><use href="#bars"/></svg>
    </div>

    <div class="navbar">
      <button class="plain" aria-label="Orbit"><svg class="nav-icon" viewBox="0 0 32 32"><path d="M3 17Q2 13 14 13Q30 13 30 18Q30 23 8 23" fill="none" stroke="#222" stroke-width="2.500"/><path d="M15 31V7H13L17 1L21 7H19V31Z" fill="#fff" stroke="#222" stroke-width="1.500"/><path d="M4 23L11 18V28Z" fill="#000"/></svg><svg class="caret"><use href="#caret"/></svg></button>
      <button class="plain" aria-label="Look at"><svg class="nav-icon" viewBox="0 0 32 32"><path d="M3 10L10 3L11 7L16 3L17 7L26 2V10" fill="#8a929a" stroke="#3a4450" stroke-width="1.500"/><rect x="1" y="11" width="30" height="20" fill="#fafafa" stroke="#3a4450" stroke-width="2"/><rect x="6" y="16" width="20" height="9" fill="#9aa2ad" stroke="#3a4450" stroke-width="2"/></svg></button>
      <button class="plain" aria-label="Pan"><svg class="nav-icon" viewBox="0 0 32 32"><path d="M13 31L2 19Q0 15 5 17L9 19L5 8Q5 4 9 7L12 14L13 3Q16 0 18 3V14L22 4Q25 2 25 6L24 15L28 9Q32 8 31 12L27 24L24 31Z" fill="#f4f4f4" stroke="#3a4450" stroke-width="2" stroke-linejoin="round"/><path d="M13 3V15M18 3V14" stroke="#3a4450" stroke-width="2"/></svg></button>
      <button class="plain" aria-label="Zoom"><svg class="nav-icon" viewBox="0 0 32 32"><path d="M18 20L25 28" stroke="#3a4450" stroke-width="7" stroke-linecap="round"/><circle cx="11" cy="14" r="10" fill="#dff0f2" stroke="#4a5560" stroke-width="2"/><path d="M27 0V10M22 5H32M24 14H32" stroke="#333" stroke-width="2"/></svg></button>
      <button class="plain fit" aria-label="Fit"><svg class="nav-icon" viewBox="0 0 32 32"><path d="M21 20L29 29" stroke="#333" stroke-width="7" stroke-linecap="round"/><circle cx="13" cy="13" r="12" fill="#d5e4e6" stroke="#444" stroke-width="2.500"/><rect x="8" y="8" width="11" height="11" fill="#fff" stroke="#444" stroke-width="2"/></svg><svg class="caret"><use href="#caret"/></svg></button>
      <button class="plain tight" aria-label="Display settings"><svg class="nav-icon" viewBox="0 0 32 32"><rect x="1" y="1" width="30" height="24" fill="#f4f4f4" stroke="#444" stroke-width="2"/><rect x="5" y="5" width="22" height="16" fill="#9dbde6" stroke="#2f4f86" stroke-width="2"/><path d="M13 26H20L23 31H9Z" fill="#f4f4f4" stroke="#444" stroke-width="2"/></svg><svg class="caret"><use href="#caret"/></svg></button>
      <button class="plain tight" aria-label="Grid and snaps"><svg class="nav-icon" viewBox="0 0 32 32"><rect x="1" y="1" width="30" height="30" fill="#fff"/><rect x="1" y="16" width="30" height="15" fill="#a8acb8"/><path d="M1 1H31V31H1ZM7 1V31M13 1V31M19 1V31M25 1V31M1 7H31M1 13H31M1 19H31M1 25H31" fill="none" stroke="#555" stroke-width="2"/></svg><svg class="caret"><use href="#caret"/></svg></button>
      <button class="plain tight" aria-label="Viewports"><svg class="nav-icon" viewBox="0 0 32 32"><path d="M1 3H15V15H1ZM17 3H31V15H17ZM1 17H15V29H1ZM17 17H31V29H17Z" fill="#b9d0ee" stroke="#2f4f86" stroke-width="2"/><path d="M5 7H11V11H5ZM21 7H27V11H21ZM5 21H11V25H5ZM21 21H27V25H21Z" fill="#9dbde6" stroke="#6f94c8"/></svg><svg class="caret"><use href="#caret"/></svg></button>
    </div>

    <p class="status">1 Profile 1 Z | Angle : 0.0 deg</p>
  </main>
</div>
<script src="grid.js"></script>
</body>
</html>
```

FILE: styles.css
```css
* { box-sizing: border-box; }
body { margin: 0; font-family: "Liberation Sans", Arial, sans-serif; font-size: 22px; color: #333; background: #f2f2f2; }
h1, h2, p, ul { margin: 0; padding: 0; font-weight: 400; }
svg { display: block; flex: none; }
.sprite { position: absolute; width: 0; height: 0; }
.plain { display: flex; align-items: center; justify-content: center; margin: 0; padding: 0; border: 0; background: none; font: inherit; color: inherit; white-space: nowrap; }
.caret { width: 12px; height: 10px; }
.app { display: flex; flex-direction: column; height: 100vh; }

.titlebar { display: flex; align-items: center; height: 46px; padding: 0 40px 0 6px; background: #fff; }
.logo { width: 28px; height: 32px; margin-right: 12px; }
.logo-f { font: bold 20px "Liberation Sans", sans-serif; fill: #fff; }
.logo-n { font: bold 8px "Liberation Sans", sans-serif; fill: #fff; }
.app-title { font-family: "Open Sans", "Noto Sans", sans-serif; font-size: 23px; color: #000; }
.window-controls { display: flex; gap: 71px; margin-left: auto; padding-bottom: 6px; }

.tabbar { display: flex; align-items: stretch; height: 64px; border-top: 1px solid #c4c4c4; border-right: 4px solid #f2f2f2; background: #ccc; }
.quick { display: flex; align-items: center; width: 386px; padding: 0 0 0 18px; color: #666; }
.quick .caret { width: 14px; height: 11px; }
.q-file { gap: 12px; margin-left: 38px; }
.q-save { margin-left: 38px; }
.q-undo { gap: 13px; margin-left: 39px; }
.q-redo { gap: 13px; margin-left: 26px; color: #8f8f8f; }
.tabs { display: flex; flex: 1; gap: 9px; padding-top: 7px; }
.tab { display: flex; flex: 1; align-items: center; padding-right: 14px; border-radius: 10px 10px 0 0; background: #bbb; font-size: 24px; color: #777; }
.tab-on { background: #f2f2f2; color: #444; }
.tab-name { display: flex; flex: 1; align-items: center; justify-content: center; gap: 12px; }
.newtab { width: 56px; margin: 7px 0 0 8px; border-radius: 10px 10px 0 0; background: #bbb; }
.account { display: flex; align-items: center; padding: 0 17px 0 24px; }
.docs { gap: 8px; }
.a-clock { margin-left: 50px; }
.a-bell { margin-left: 37px; }
.a-help { margin-left: 36px; }
.a-user { margin-left: 34px; }

.ribbon { display: flex; align-items: flex-start; height: 170px; padding-left: 23px; background: linear-gradient(#f2f2f2 162px, #ddd 162px, #ddd 165px, #f2f2f2 165px); font-family: Roboto, sans-serif; font-size: 21px; }
.workspace { gap: 12px; width: 220px; height: 122px; margin-top: 21px; border: 3px solid #dcdcdc; border-radius: 12px; font-weight: 500; font-size: 22px; }
.ribbon-main { padding-left: 31px; }
.modes { display: flex; gap: 46px; height: 50px; padding-left: 3px; }
.mode { padding: 10px 24px 0; line-height: 24px; border-bottom: 8px solid transparent; color: #333; text-decoration: none; }
.mode-on { border-color: #0696d7; color: #0696d7; }
.groups { display: flex; padding-top: 3px; }
.group { display: flex; flex-direction: column; align-items: center; gap: 15px; height: 103px; padding: 0 20px 0 22px; border-right: 3px solid #dcdcdc; }
.group:first-child { padding-left: 0; }
.group:last-child { border-right: 0; }
.tools { display: flex; gap: 22px; }
.tool { width: 64px; height: 64px; overflow: visible; }
.label { gap: 9px; padding: 0 6px 0 1px; line-height: 24px; }

.viewport { position: relative; flex: 1; min-height: 0; overflow: hidden; }
.scene { position: absolute; inset: 0; width: 100%; height: 100%; }
.cube-back { font: bold 23px Roboto, sans-serif; fill: #8b8f94; }
.cube-top { font: bold 15px Roboto, sans-serif; fill: #a4a6a8; }
.cube-axis { font: bold 28px "Liberation Sans", sans-serif; }

.browser { position: absolute; left: 9px; top: 8px; width: 599px; }
.panel-head { display: flex; align-items: center; height: 50px; padding: 0 2px 0 8px; border: 2px solid #ccc; background: #f2f2f2; }
.panel-title { flex: 1; font-family: Roboto, sans-serif; font-size: 22px; color: #666; }
.browser .panel-title { padding-left: 19px; }
.bars { width: 8px; height: 22px; margin-left: 11px; }
.tree { display: flex; flex-direction: column; gap: 6px; padding: 9px 0 0 31px; list-style: none; }
.row { display: flex; align-items: center; height: 42px; }
.l1 { padding-left: 36px; }
.l2 { padding-left: 72px; }
.l2 .cell { margin-left: 40px; }
.toggle { width: 40px; }
.cell { display: flex; align-items: center; height: 42px; padding-left: 6px; background: #f2f2f2; }
.eye { width: 32px; height: 22px; margin-right: 12px; color: #999; }
.dim { color: #d4d4d4; }
.item { display: flex; align-items: center; align-self: stretch; gap: 28px; padding: 0 19px 0 6px; }
.bare { padding-left: 0; }
.glyph { width: 32px; height: 28px; }
.root { align-self: center; height: 32px; padding-right: 22px; background: #999; color: #fff; font-weight: 700; font-size: 23px; }
.root .glyph { height: 32px; }
.radio { width: 26px; height: 26px; margin: 0 14px 0 8px; }
.hatch { background: repeating-linear-gradient(135deg, #7d93b5 0 4px, transparent 4px 9px) 0 100% / 100% 7px no-repeat; }
.picked { background: repeating-linear-gradient(135deg, #6f93ab 0 4px, transparent 4px 9px) 0 88% / 90% 7px no-repeat, #0696d7; color: #fff; }

.angle-float { position: absolute; left: 57.43%; top: 56%; display: flex; align-items: center; gap: 20px; height: 46px; padding-right: 20px; background: #f2f2f2; }
.grip { width: 23px; height: 46px; margin-right: -15px; border-right: 4px solid #ddd; background: repeating-linear-gradient(135deg, #c4c4c4 0 1px, transparent 1px 5px) 8px 4px / 6px 38px no-repeat; }
.float-input { width: 138px; height: 41px; padding: 0; border: 2px solid #ccc; background: #fff; font: inherit; color: #333; text-align: center; }

.revolve { position: absolute; right: 281px; top: 412px; width: 509px; border: 2px solid #ccc; border-right: 0; border-bottom: 0; background: #f2f2f2; }
.revolve-head { display: flex; align-items: center; gap: 20px; height: 52px; padding-left: 10px; border-bottom: 2px solid #ccc; }
.fields { padding: 0 0 4px 25px; border-bottom: 2px solid #ccc; }
.field { display: flex; align-items: center; height: 61px; }
.field label { width: 146px; }
.pick { justify-content: flex-start; gap: 10px; width: 160px; height: 55px; padding-left: 12px; border: 3px solid #ddd; border-radius: 3px; background: #fff; }
.pick-on { border-color: #0696d7; background: #0696d7; color: #fff; }
.cursor { width: 20px; height: 32px; }
.clear { margin-left: 22px; color: #555; }
.check { position: relative; appearance: none; width: 28px; height: 28px; margin: 0 0 0 9px; border: 2px solid #666; border-radius: 6px; background: linear-gradient(#bbb, #eee); }
.check::before { content: ""; position: absolute; left: 8px; top: 1px; width: 9px; height: 18px; border: solid #000; border-width: 0 3px 3px 0; transform: rotate(40deg); }
.combo { position: relative; width: 273px; height: 55px; }
.combo select, .text { width: 273px; height: 55px; border: 3px solid #ddd; border-radius: 3px; background: #fff; font: inherit; color: #333; appearance: none; padding: 0 0 0 46px; }
.text { height: 52px; padding-left: 5px; border: 2px solid #ccc; border-radius: 0; }
.combo-icon { position: absolute; left: 7px; top: 11px; width: 32px; height: 32px; }
.combo .caret { position: absolute; right: 11px; top: 23px; width: 14px; height: 10px; color: #222; }
.revolve-foot { display: flex; align-items: center; gap: 21px; height: 71px; padding: 0 24px 0 16px; }
.revolve-foot svg { margin-right: auto; }
.act { width: 122px; height: 38px; border: 2px solid #b4b4b4; background: #e9e9e9; font-size: 24px; color: #666; }

.comments { position: absolute; left: 9px; bottom: 6px; width: 599px; padding-left: 47px; border-top-color: #e4e4e4; }
.comments .panel-title { font-size: 21px; }
.navbar { position: absolute; left: 44.19%; bottom: 6px; display: flex; align-items: center; gap: 12px; height: 48px; padding: 0 8px 0 6px; background: #f2f2f2; }
.navbar .plain { gap: 10px; }
.navbar .plain:nth-child(2), .navbar .plain:nth-child(3), .navbar .plain:nth-child(4) { margin-right: 8px; }
.navbar .tight { gap: 5px; }
.nav-icon { width: 32px; height: 32px; }
.navbar .caret { height: 9px; color: #333; }
.status { position: absolute; right: 40px; bottom: 16px; font-size: 23px; font-weight: 700; }
```

FILE: grid.js
```js
// Draws the ground plane grid: two families of parallel lines, five minor steps per major one.
(function () {
  var left = 0, right = 4400, top = 301, bottom = 2271;
  var rowStep = 41.35 / 5, rowSlope = 0.0443, rowOrigin = 1676;
  var colStep = 101.03 / 5, colSlope = -0.2644, colOrigin = 2661;
  var minor = '', major = '';
  function add(index, d) {
    if (index % 5 === 0) { major += d; } else { minor += d; }
  }
  for (var r = -192; r <= 80; r++) {
    var y = rowOrigin + r * rowStep;
    if (r !== 0) {
      add(r, 'M' + left + ' ' + y.toFixed(2) + 'L' + right + ' ' + (y + rowSlope * (right - left)).toFixed(2));
    }
  }
  for (var c = -135; c <= 115; c++) {
    var x = colOrigin + c * colStep;
    if (c !== 0) {
      add(c, 'M' + x.toFixed(2) + ' ' + top + 'L' + (x + colSlope * (bottom - top)).toFixed(2) + ' ' + bottom);
    }
  }
  document.getElementById('minorGrid').setAttribute('d', minor);
  document.getElementById('majorGrid').setAttribute('d', major);
})();
```
